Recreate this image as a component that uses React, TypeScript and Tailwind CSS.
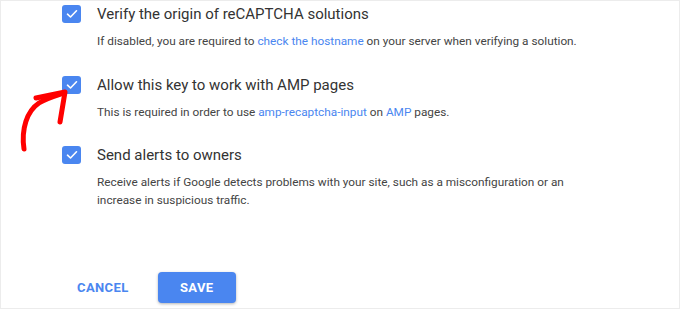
import React from "react";

interface Option {
  title: string;
  body: React.ReactNode;
}

function Check() {
  return (
    <div className="flex h-[18px] w-[19px] shrink-0 items-center justify-center rounded-[3px] bg-[#4a86f0]">
      <svg width="12" height="10" viewBox="0 0 12 10" fill="none">
        <path d="M1.5 5.2 L4.5 8 L10.5 1.8" stroke="#fff" strokeWidth="1.6" strokeLinecap="round" strokeLinejoin="round" />
      </svg>
    </div>
  );
}

const link = "text-[#4a86f0]";

const options: Option[] = [
  {
    title: "Verify the origin of reCAPTCHA solutions",
    body: (
      <>
        If disabled, you are required to <span className={link}>check the hostname</span> on your server when verifying a
        solution.
      </>
    ),
  },
  {
    title: "Allow this key to work with AMP pages",
    body: (
      <>
        This is required in order to use <span className={link}>amp-recaptcha-input</span> on{" "}
        <span className={link}>AMP</span> pages.
      </>
    ),
  },
  {
    title: "Send alerts to owners",
    body: (
      <>
        Receive alerts if Google detects problems with your site, such as a misconfiguration or an
        <br />
        increase in suspicious traffic.
      </>
    ),
  },
];

export default function App() {
  return (
    <div
      className="relative h-[309px] w-[680px] overflow-hidden border border-[#ececec] bg-white"
      style={{ fontFamily: "Roboto, 'Open Sans', sans-serif" }}
    >
      <div className="flex flex-col gap-[25px] pl-[61px] pt-[4px]">
        {options.map((o) => (
          <div key={o.title} className="flex gap-[16px]">
            <Check />
            <div>
              <div className="text-[15px] leading-[19px] text-[#333]">{o.title}</div>
              <p className="mt-[9px] text-[11.8px] leading-[17.5px] text-[#444]">{o.body}</p>
            </div>
          </div>
        ))}
      </div>

      <div className="mt-[63px] flex items-center gap-[13px] pl-[60px]">
        <button className="h-[31px] px-[16px] text-[13px] font-bold tracking-[0.4px] text-[#4a86f0]">CANCEL</button>
        <button className="h-[31px] w-[78px] rounded-[4px] bg-[#4a86f0] text-[13px] font-bold tracking-[0.3px] text-white shadow-[0_1px_3px_rgba(0,0,0,0.3)]">
          SAVE
        </button>
      </div>

      {/* red annotation arrow */}
      <svg className="absolute left-0 top-0" width="90" height="160" viewBox="0 0 90 160" fill="none">
        <path
          d="M23 148 C20 128 26 110 38 102 C46 97 54 95 63 92"
          stroke="#f00"
          strokeWidth="5"
          strokeLinecap="round"
          fill="none"
        />
        <path d="M35 97 L64 91 L59 121" stroke="#f00" strokeWidth="5" strokeLinecap="round" strokeLinejoin="round" fill="none" />
      </svg>
    </div>
  );
}
